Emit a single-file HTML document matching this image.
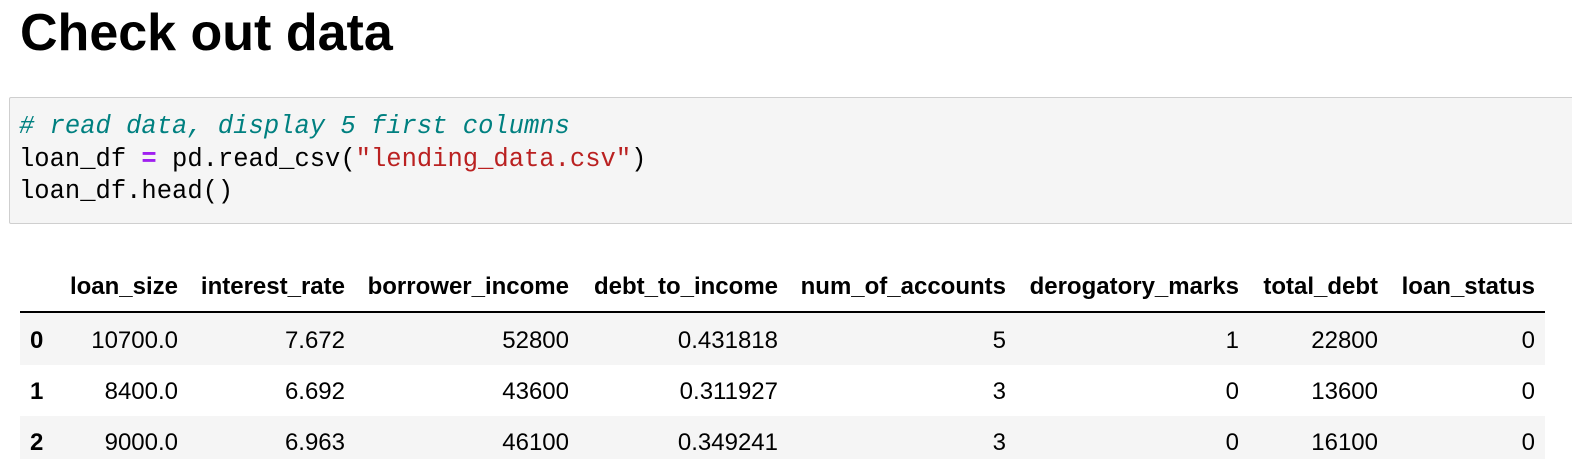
<!DOCTYPE html>
<html><head><meta charset="utf-8"><style>
body{margin:0;width:1572px;height:459px;overflow:hidden;background:#fff;font-family:"Liberation Sans",Arial,sans-serif;position:relative}
h1{position:absolute;left:20px;top:7px;margin:0;font-size:52px;line-height:1;font-weight:bold;color:#000;white-space:nowrap}
.code{position:absolute;left:9px;top:97px;width:1580px;height:125px;background:#f5f5f5;border:1px solid #cfcfcf;border-radius:2px}
.code pre{margin:0;position:absolute;left:9px;top:13px;font-family:"Liberation Mono",monospace;font-size:25.5px;line-height:32.5px;color:#000}
.c{color:#008080;font-style:italic}.o{color:#a020f0;font-weight:bold}.s{color:#ba2121}
.t{position:absolute;font-size:24px;line-height:28px;white-space:nowrap;color:#000}
.b{font-weight:bold}
.stripe{position:absolute;left:20px;width:1525px;background:#f5f5f5}
</style></head><body>
<h1>Check out data</h1>
<div class="code"><pre><span class="c"># read data, display 5 first columns</span>
loan_df <span class="o">=</span> pd.read_csv(<span class="s">"lending_data.csv"</span>)
loan_df.head()</pre></div>
<div class="stripe" style="top:313px;height:52px"></div>
<div class="stripe" style="top:416px;height:43px"></div>
<div style="position:absolute;left:20px;top:311px;width:1525px;height:2px;background:#000"></div>
<div id="tbl"></div>
<script>
const rights=[178,345,569,778,1006,1239,1378,1535];
const head=["loan_size","interest_rate","borrower_income","debt_to_income","num_of_accounts","derogatory_marks","total_debt","loan_status"];
const rows=[["10700.0","7.672","52800","0.431818","5","1","22800","0"],["8400.0","6.692","43600","0.311927","3","0","13600","0"],["9000.0","6.963","46100","0.349241","3","0","16100","0"]];
let h="";
const cell=(txt,r,y,b)=>`<div class="t${b?' b':''}" style="right:${1572-r}px;top:${y-13}px">${txt}</div>`;
head.forEach((t,i)=>h+=cell(t,rights[i],286,1));
[340,391,442].forEach((y,ri)=>{h+=`<div class="t b" style="left:30px;top:${y-13}px">${ri}</div>`;rows[ri].forEach((t,i)=>h+=cell(t,rights[i],y,0));});
document.getElementById("tbl").innerHTML=h;
</script>
</body></html>
